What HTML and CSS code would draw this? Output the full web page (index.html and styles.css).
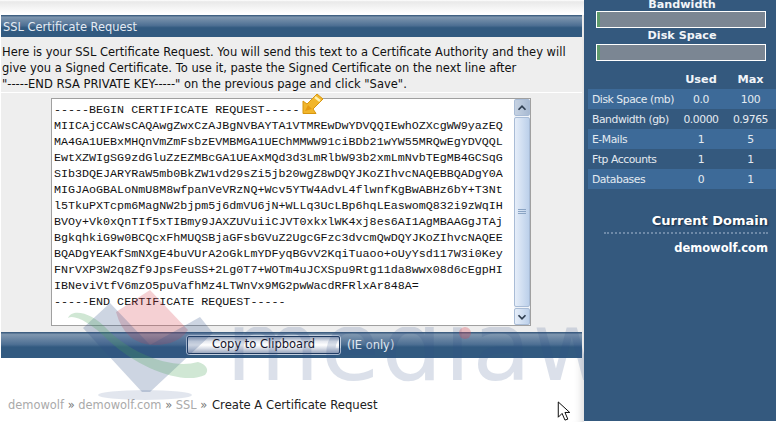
FILE: index.html
```html
<!DOCTYPE html>
<html lang="en">
<head>
<meta charset="utf-8">
<title>SSL Certificate Request</title>
<link rel="stylesheet" href="styles.css">
</head>
<body>
<div class="page">
  <main class="main">
    <div class="topfade"></div>
    <section class="panel">
      <h1 class="bar title">SSL Certificate Request</h1>
      <p class="intro">Here is your SSL Certificate Request. You will send this text to a Certificate Authority and they will give you a Signed Certificate. To use it, paste the Signed Certificate on the next line after<br>"-----END RSA PRIVATE KEY-----" on the previous page and click "Save".</p>
      <div class="boxrow">
        <div class="certbox">
          <pre class="cert">-----BEGIN CERTIFICATE REQUEST-----
MIICAjCCAWsCAQAwgZwxCzAJBgNVBAYTA1VTMREwDwYDVQQIEwhOZXcgWW9yazEQ
MA4GA1UEBxMHQnVmZmFsbzEVMBMGA1UEChMMWW91ciBDb21wYW55MRQwEgYDVQQL
EwtXZWIgSG9zdGluZzEZMBcGA1UEAxMQd3d3LmRlbW93b2xmLmNvbTEgMB4GCSqG
SIb3DQEJARYRaW5mb0BkZW1vd29sZi5jb20wgZ8wDQYJKoZIhvcNAQEBBQADgY0A
MIGJAoGBALoNmU8M8wfpanVeVRzNQ+Wcv5YTW4AdvL4flwnfKgBwABHz6bY+T3Nt
l5TkuPXTcpm6MagNW2bjpm5j6dmVU6jN+WLLq3UcLBp6hqLEaswomQ832i9zWqIH
BVOy+Vk0xQnTIf5xTIBmy9JAXZUVuiiCJVT0xkxlWK4xj8es6AI1AgMBAAGgJTAj
BgkqhkiG9w0BCQcxFhMUQSBjaGFsbGVuZ2UgcGFzc3dvcmQwDQYJKoZIhvcNAQEE
BQADgYEAKfSmNXgE4buVUrA2oGkLmYDFyqBGvV2KqiTuaoo+oUyYsd117W3i0Key
FNrVXP3W2q8Zf9JpsFeuSS+2Lg0T7+WOTm4uJCXSpu9Rtg11da8wwx08d6cEgpHI
IBNeviVtfV6mzO5puVafhMz4LTWnVx9MG2pwWacdRFRlxAr848A=
-----END CERTIFICATE REQUEST-----</pre>
          <svg class="pencil" viewBox="0 0 22 22" aria-hidden="true">
            <path d="M1 8l4 3 10-10 6 5-10 10 3 4.500H1z" fill="#f1b62c" stroke="#d8960f" stroke-linejoin="round"/>
            <path d="M13 4l5 4" stroke="#fff2b0" stroke-width="2.500"/>
            <path d="M3 18l3-6 4 4z" fill="#e59a12"/>
          </svg>
          <div class="scroll">
            <span class="sbtn sbtn-up"><svg viewBox="0 0 16 16" aria-hidden="true"><path d="M4 10l4-4 4 4" fill="none" stroke="#2f3e50" stroke-width="2"/></svg></span>
            <span class="thumb"><svg viewBox="0 0 8 6" aria-hidden="true"><path d="M0 .5h8M0 2.500h8M0 4.500h8" stroke="#8aa4c4"/></svg></span>
            <span class="sbtn"><svg viewBox="0 0 16 16" aria-hidden="true"><path d="M4 6l4 4 4-4" fill="none" stroke="#2f3e50" stroke-width="2"/></svg></span>
          </div>
        </div>
      </div>
      <div class="bar actions">
        <button class="copy" type="button">Copy to Clipboard</button>
        <span class="ieonly">(IE only)</span>
      </div>
    </section>
    <nav class="crumbs"><a>demowolf</a> <b>»</b> <a>demowolf.com</a> <b>»</b> <a>SSL</a> <b>»</b> <span>Create A Certificate Request</span></nav>
  </main>
  <aside class="side">
    <h2 class="meter-title cut">Bandwidth</h2>
    <div class="meter"><i></i></div>
    <h2 class="meter-title">Disk Space</h2>
    <div class="meter"><i></i></div>
    <table class="stats">
      <thead><tr><th></th><th>Used</th><th>Max</th></tr></thead>
      <tbody>
        <tr><td>Disk Space (mb)</td><td>0.0</td><td>100</td></tr>
        <tr><td>Bandwidth (gb)</td><td>0.0000</td><td>0.9765</td></tr>
        <tr><td>E-Mails</td><td>1</td><td>5</td></tr>
        <tr><td>Ftp Accounts</td><td>1</td><td>1</td></tr>
        <tr><td>Databases</td><td>0</td><td>1</td></tr>
      </tbody>
    </table>
    <div class="domain-head">Current Domain</div>
    <div class="domain">demowolf.com</div>
  </aside>
  <svg class="watermark" viewBox="0 0 584 422" aria-hidden="true">
    <defs><clipPath id="wordclip"><rect x="220" y="327" width="364" height="60"/></clipPath></defs>
    <path d="M150 290L116 312Q125 345 155 345Q178 345 188 330z" fill="#d8434f" opacity=".25"/>
    <path d="M83 328L110 303 150 345 200 317 213 333 150 392H142z" fill="#2f4f86" opacity=".24"/>
    <ellipse cx="145" cy="395" rx="47" ry="5" fill="#2f4f86" opacity=".14"/>
    <path d="M68 318C72 308 92 312 108 330 130 352 170 370 198 362 206 364 210 370 205 375 185 385 140 370 108 340 90 322 74 314 68 318z" fill="#4aa35a" opacity=".26"/>
    <g clip-path="url(#wordclip)"><text x="226" y="380" class="wordmark">mediawax</text></g>
    <circle cx="465" cy="333" r="6" fill="#d8434f" opacity=".3"/>
  </svg>
  <svg class="cursor" viewBox="0 0 14 22" aria-hidden="true"><path d="M1 1v16l4-4 3 7 3-1-3-7h5z" fill="#fff" stroke="#000"/></svg>
</div>
</body>
</html>
```

FILE: styles.css
```css
html, body { margin: 0; padding: 0; background: #fff; overflow: hidden; }
.page {
  position: relative;
  display: flex;
  width: 776px;
  height: 422px;
  overflow: hidden;
  font-family: "DejaVu Sans", Verdana, sans-serif;
  font-size: 11.45px;
}
.main {
  width: 584px;
  flex: none;
  box-shadow: inset -10px 0 8px -8px #d8d8d8;
}
.topfade { height: 15px; background: linear-gradient(#fff 0, #e9e9e9 12%, #fff 90%); }
.panel { margin-left: 1px; width: 581px; background: #eee; }
.bar {
  background: linear-gradient(#2f5276 0, #7e96af 10%, #4d6f93 48%, #325a80 58%, #325a80 100%);
  color: #e4ebf3;
}
.title { margin: 0; height: 22px; padding-left: 2px; font-size: 11.45px; font-weight: normal; line-height: 24px; }
.intro {
  margin: 0;
  height: 56px;
  padding: 7px 0 0 1px;
  box-sizing: border-box;
  font-size: 11.5px;
  line-height: 16px;
  color: #111;
  border-bottom: 1px solid #fff;
}
.boxrow { padding: 5px 0 6px 50px; height: 228px; box-sizing: content-box; }
.certbox {
  position: relative;
  width: 478px;
  height: 226px;
  background: #fff;
  border: 1px solid #a0a0a0;
}
.cert {
  margin: 0;
  padding: 3px 0 0 2px;
  font-family: "Liberation Mono", "Courier New", monospace;
  font-size: 11.7px;
  line-height: 16px;
  color: #111;
}
.pencil { position: absolute; left: 250px; top: -6px; width: 22px; height: 22px; }
.scroll {
  position: absolute;
  right: 0;
  top: 0;
  bottom: 0;
  width: 16px;
  display: flex;
  flex-direction: column;
  gap: 1px;
  background: #f0f4f9;
}
.sbtn, .thumb {
  display: flex;
  align-items: center;
  justify-content: center;
  border: 1px solid #a9bcd6;
  border-radius: 2px;
  background: linear-gradient(90deg, #e6eef9, #bcd0ea);
  box-sizing: border-box;
}
.sbtn { height: 17px; flex: none; }
.sbtn-up { background: linear-gradient(90deg, #c6d2e2, #a8bad2); }
.sbtn svg { width: 14px; height: 14px; }
.thumb { flex: 1; }
.thumb svg { width: 8px; height: 6px; }
.actions {
  display: flex;
  align-items: center;
  height: 26px;
  padding-left: 185px;
  gap: 6px;
}
.copy {
  width: 155px;
  height: 20px;
  padding: 0 0 3px;
  font-family: inherit;
  font-size: 11.5px;
  color: #14142a;
  border: 1px solid #c4d0e0;
  outline: 1px solid #1f3a5f;
  outline-offset: -2px;
  border-radius: 3px;
  background: linear-gradient(#7f90ab 0, #e6e9f0 30%, #fff 50%, #d7dce6 70%, #8d9bb3 100%);
}
.ieonly { color: #e4ebf3; }
.crumbs { margin: 39px 0 0 8px; color: #aaa; line-height: 16px; }
.crumbs b { font-weight: normal; color: #777; }
.crumbs span { margin-left: 1px; font-size: 11.65px; color: #222; }
.side {
  width: 192px;
  flex: none;
  height: 421px;
  box-sizing: border-box;
  padding: 0 0 0 4px;
  background: #34597e;
  color: #fff;
}
.meter-title {
  margin: 0;
  height: 16px;
  text-align: center;
  font-size: 11.2px;
  font-weight: bold;
  line-height: 16px;
  color: #f2f5f9;
}
.cut { height: 11px; line-height: 9px; }
.meter {
  width: 168px;
  height: 15px;
  margin: 0 0 0 8px;
  border: 1px solid #fff;
  background: #7b8693;
}
.meter i { display: block; width: 3px; height: 15px; background: #5f9a6c; }
.stats {
  width: 188px;
  margin-top: 8px;
  table-layout: fixed;
  border-collapse: collapse;
  font-size: 10.8px;
  color: #e4eaf1;
}
.stats th { height: 20px; padding: 0; font-size: 11.3px; color: #f2f5f9; }
.stats th:first-child { width: 89px; }
.stats th:nth-child(2) { width: 48px; }
.stats th:nth-child(3) { width: 51px; }
.stats td { height: 20px; padding: 0; text-align: center; letter-spacing: -.45px; white-space: nowrap; }
.stats td:first-child { text-align: left; padding-left: 4px; }
.stats tbody tr:nth-child(odd) { background: #3d6a98; }
.stats tbody tr:nth-child(even) { background: #34597e; }
.domain-head {
  margin: 24px 8px 0 16px;
  padding-bottom: 3px;
  text-align: right;
  font-size: 13px;
  font-weight: bold;
  line-height: 16px;
  text-shadow: 1px 1px 2px #12263c;
  border-bottom: 2px dotted #6e8aa8;
}
.domain {
  margin: 6px 8px 0 0;
  text-align: right;
  font-size: 11.5px;
  font-weight: bold;
  line-height: 16px;
}
.watermark { position: absolute; left: 0; top: 0; width: 584px; height: 422px; pointer-events: none; }
.wordmark { font-family: "DejaVu Sans", sans-serif; font-size: 96px; letter-spacing: 1.5px; fill: #2f4f86; opacity: .17; }
.cursor { position: absolute; left: 557px; top: 401px; width: 14px; height: 21px; }
```
